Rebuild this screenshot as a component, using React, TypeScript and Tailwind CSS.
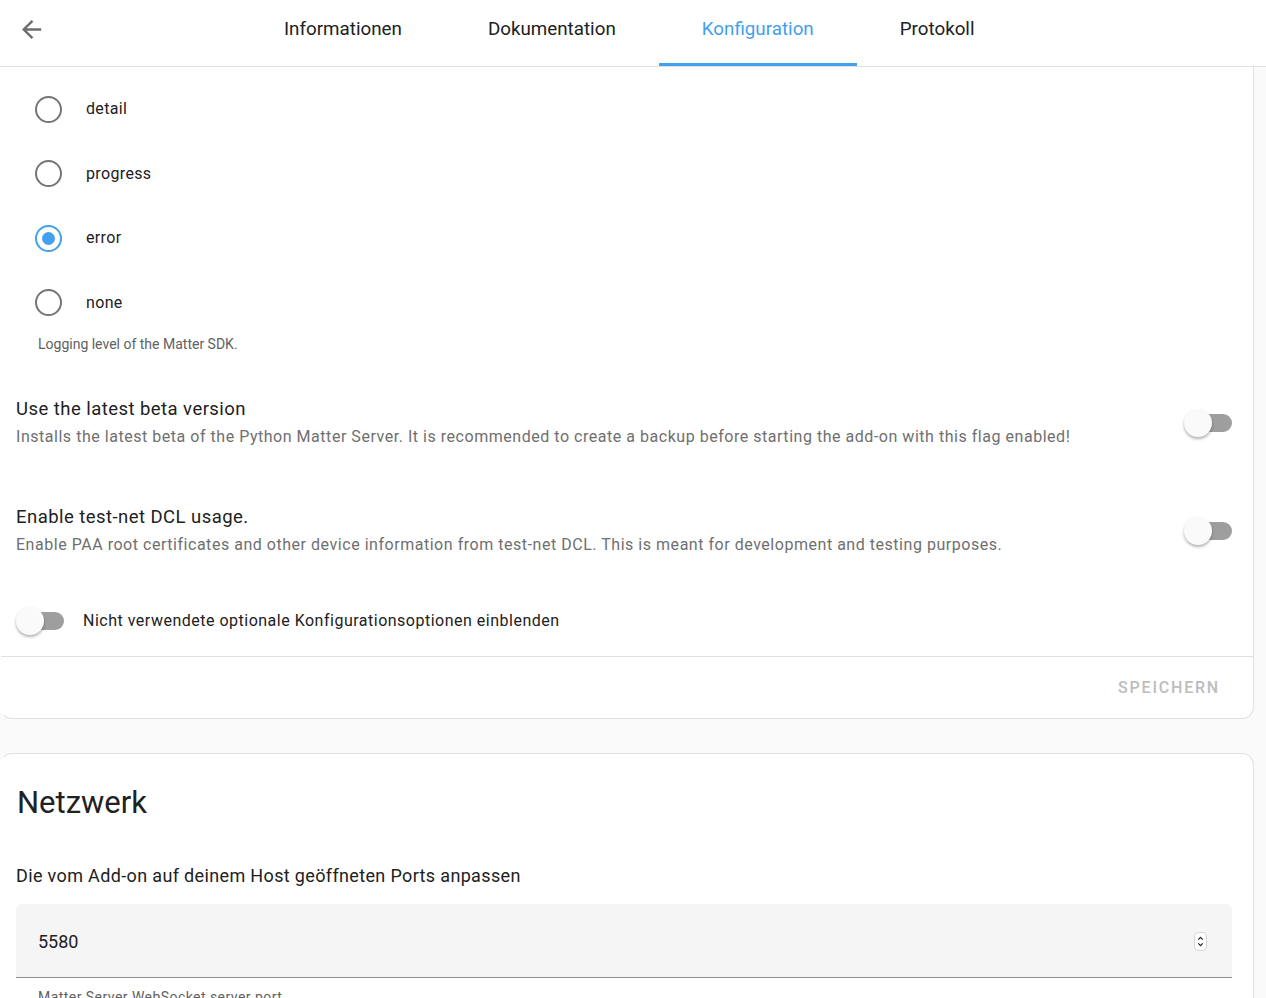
const font = { fontFamily: 'Roboto, "Noto Sans", Arial, sans-serif' };

const tabs = ['Informationen', 'Dokumentation', 'Konfiguration', 'Protokoll'];
const levels = ['detail', 'progress', 'error', 'none'];

function Toggle() {
  return (
    <div className="relative h-[28px] w-[48px] shrink-0">
      <div className="absolute right-0 top-[5px] h-[18px] w-[34px] rounded-full bg-[#9e9e9e]" />
      <div className="absolute left-0 top-0 h-[28px] w-[28px] rounded-full bg-[#fafafa] shadow-[0_2px_3px_rgba(0,0,0,0.3)]" />
    </div>
  );
}

function Radio({ checked }: { checked: boolean }) {
  return (
    <div
      className={
        checked
          ? 'flex h-[27px] w-[27px] items-center justify-center rounded-full border-[2.5px] border-[#42a0ef]'
          : 'flex h-[27px] w-[27px] items-center justify-center rounded-full border-[2.5px] border-[#757575]'
      }
    >
      {checked && <div className="h-[13px] w-[13px] rounded-full bg-[#42a0ef]" />}
    </div>
  );
}

function SettingRow({ title, description }: { title: string; description: string }) {
  return (
    <div className="flex h-[108px] items-center justify-between pl-[15px] pr-[21px]">
      <div>
        <div className="text-[18.5px] leading-[24px] tracking-[0.45px] text-[#212121]">{title}</div>
        <div className="mt-[4px] text-[16px] leading-[24px] tracking-[0.53px] text-[#6f6f6f]">{description}</div>
      </div>
      <Toggle />
    </div>
  );
}

export default function App() {
  return (
    <div className="h-[998px] overflow-hidden bg-[#fafafa]" style={font}>
      <header className="flex h-[67px] border-b border-[#e0e0e0] bg-white">
        <div className="flex w-[241px] items-center pb-[8px] pl-[17px]">
          <svg viewBox="0 0 24 24" className="h-[29px] w-[29px] fill-[#6d6d6d]">
            <path d="M20,11V13H8L13.5,18.5L12.08,19.92L4.16,12L12.08,4.08L13.5,5.5L8,11H20Z" />
          </svg>
        </div>
        <nav className="flex">
          {tabs.map((tab) => (
            <div
              key={tab}
              className={
                tab === 'Konfiguration'
                  ? 'flex items-center border-b-[3px] border-[#42a0ef] px-[43px] pb-[4px] text-[18.8px] text-[#42a0ef]'
                  : 'flex items-center border-b-[3px] border-transparent px-[43px] pb-[4px] text-[18.8px] text-[#212121]'
              }
            >
              {tab}
            </div>
          ))}
        </nav>
      </header>

      <div className="mr-[12px] rounded-b-xl border-x border-b border-[#e0e0e0] border-l-transparent bg-white">
        <div className="pt-[10px]">
          {levels.map((level) => (
            <div key={level} className="flex h-[64.5px] items-center">
              <div className="flex w-[85px] pl-[34px]">
                <Radio checked={level === 'error'} />
              </div>
              <span className="text-[16px] tracking-[0.35px] text-[#212121]">{level}</span>
            </div>
          ))}
          <div className="mt-[-1px] pl-[37px] text-[14px] leading-[20px] text-[#616161]">
            Logging level of the Matter SDK.
          </div>
        </div>

        <div className="mt-[15px]">
          <SettingRow
            title="Use the latest beta version"
            description="Installs the latest beta of the Python Matter Server. It is recommended to create a backup before starting the add-on with this flag enabled!"
          />
          <SettingRow
            title="Enable test-net DCL usage."
            description="Enable PAA root certificates and other device information from test-net DCL. This is meant for development and testing purposes."
          />
          <div className="flex h-[71px] items-center gap-[19px] pl-[15px]">
            <Toggle />
            <span className="text-[16px] tracking-[0.5px] text-[#212121]">
              Nicht verwendete optionale Konfigurationsoptionen einblenden
            </span>
          </div>
        </div>

        <div className="flex h-[62px] items-center justify-end border-t border-[#e0e0e0] pr-[33px]">
          <span className="text-[16px] font-medium tracking-[1.8px] text-[#bdbdbd]">SPEICHERN</span>
        </div>
      </div>

      <div className="mr-[12px] mt-[34px] rounded-t-xl border-x border-t border-[#e0e0e0] border-l-transparent bg-white pb-10">
        <h1 className="pl-[16px] pt-[29px] text-[31px] leading-[40px] text-[#212121]">Netzwerk</h1>
        <div className="mt-[41px] pl-[15px] text-[18px] leading-[24px] tracking-[0.35px] text-[#212121]">
          Die vom Add-on auf deinem Host geöffneten Ports anpassen
        </div>
        <div className="ml-[15px] mr-[21px] mt-[16px] flex h-[74px] items-center justify-between rounded-t-[6px] border-b border-[#8f8f8f] bg-[#f5f5f5] pl-[22px] pr-[25px] pt-[1px]">
          <span className="text-[18px] text-[#212121]">5580</span>
          <div className="flex h-[19px] w-[13px] flex-col items-center justify-center rounded-[4px] border border-[#d6d6d6] bg-white">
            <svg viewBox="0 0 10 14" className="h-[15px] w-[9px]">
              <path d="M2.5 5 L5 2.5 L7.5 5" fill="none" stroke="#222" strokeWidth="1.3" />
              <path d="M2.5 9 L5 11.5 L7.5 9" fill="none" stroke="#222" strokeWidth="1.3" />
            </svg>
          </div>
        </div>
        <div className="pl-[37px] pt-[9px] text-[14px] leading-[20px] tracking-[0.45px] text-[#616161]">
          Matter Server WebSocket server port
        </div>
      </div>
    </div>
  );
}
